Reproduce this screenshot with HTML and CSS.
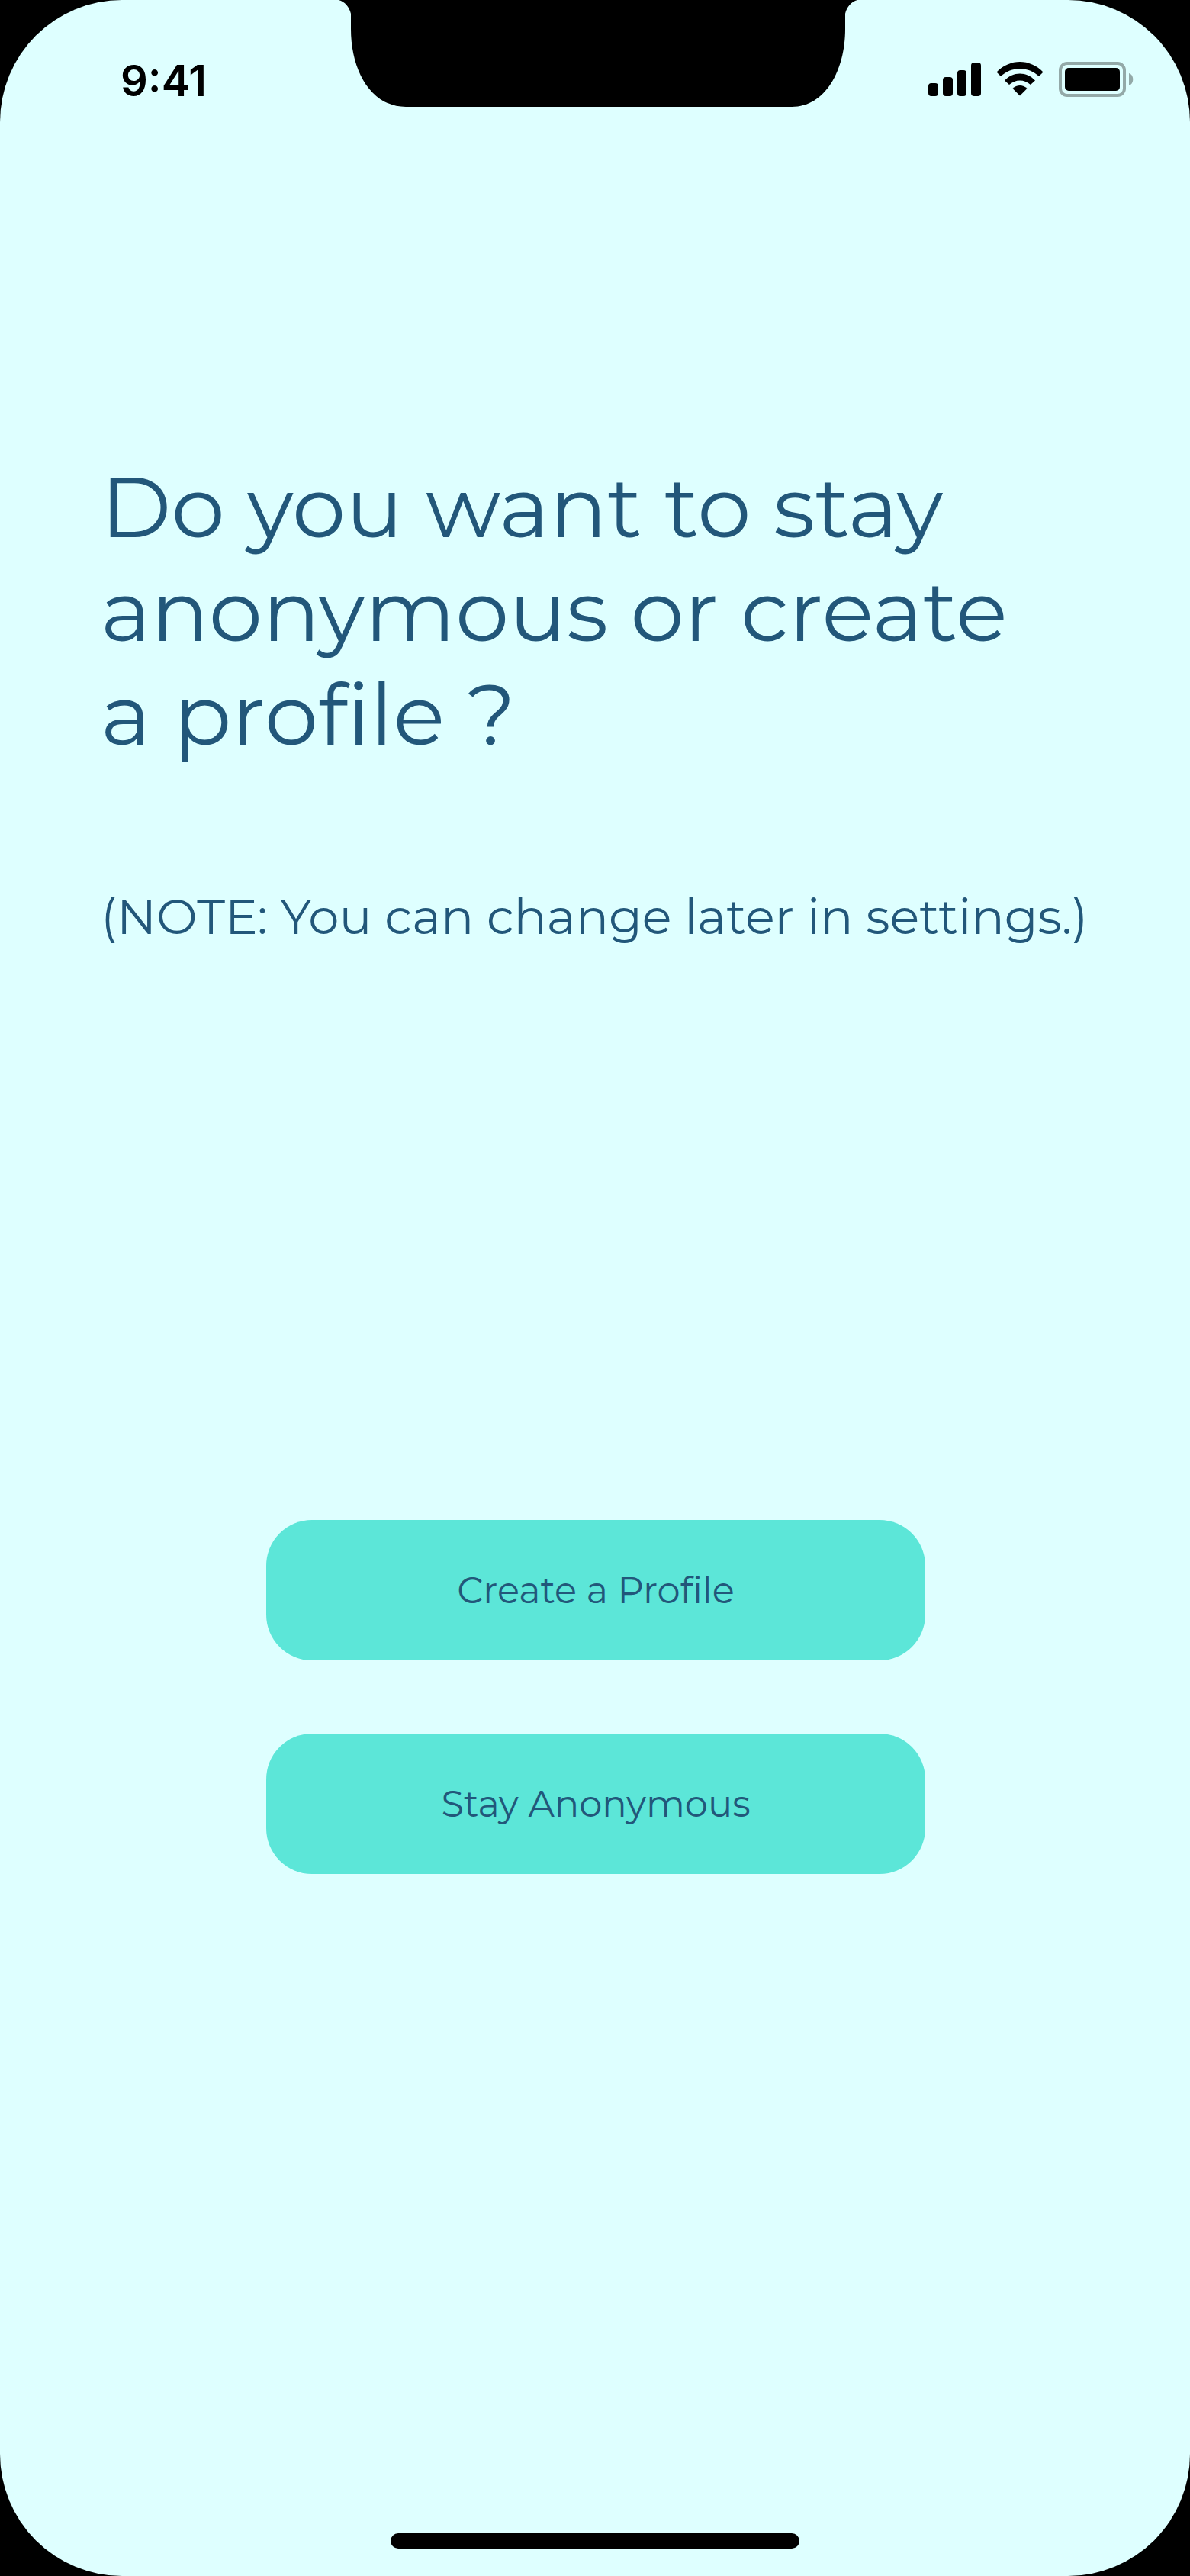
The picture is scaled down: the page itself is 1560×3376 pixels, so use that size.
FILE: index.html
```html
<!DOCTYPE html>
<html lang="en">
<head>
    <meta charset="UTF-8">
    <meta name="viewport" content="width=device-width, initial-scale=1.0">
    <title>Stay anonymous or create a profile</title>
    <link rel="stylesheet" href="styles.css">
</head>
<body>
    <div class="screen">
        <svg class="notch" viewBox="0 0 680 140" aria-hidden="true">
            <path d="M0 0 C8 2 14 9 16 18 V38 C16 92 42 140 88 140 H594 C638 140 664 92 664 38 V18 C666 9 672 2 680 0 Z"/>
        </svg>

        <header class="status-bar">
            <span class="time">9:41</span>
            <div class="status-icons">
                <svg class="icon-signal" viewBox="0 0 69 48" aria-hidden="true">
                    <rect x="0" y="29" width="13" height="17" rx="4"/>
                    <rect x="19" y="21" width="13" height="25" rx="4"/>
                    <rect x="38" y="12" width="12" height="34" rx="4"/>
                    <rect x="56" y="2" width="13" height="44" rx="4"/>
                </svg>
                <svg class="icon-wifi" viewBox="0 0 62 48" aria-hidden="true">
                    <path d="M.5 14.500 C18 -3.500 44 -3.500 61.500 14.500 L56 20 C42 6.500 20 6.500 6 20 Z"/>
                    <path d="M11 25.500 C22 13.500 40 13.500 51 25.500 L45 31 C37 23.500 25 23.500 17 31 Z"/>
                    <path d="M21.500 36 C27 30.500 35 30.500 40.500 36 L31 45.500 Z"/>
                </svg>
                <svg class="icon-battery" viewBox="0 0 98 48" aria-hidden="true">
                    <rect class="battery-shell" x="2" y="3" width="84" height="42" rx="9"/>
                    <rect x="8" y="9" width="72" height="30" rx="5"/>
                    <path class="battery-tip" d="M92 16 C99 18 99 30 92 32 Z"/>
                </svg>
            </div>
        </header>

        <main class="content">
            <h1>Do you want to stay<br>anonymous or create<br>a profile ?</h1>
            <p class="note">(NOTE: You can change later in settings.)</p>
            <div class="actions">
                <button type="button" class="button">Create a Profile</button>
                <button type="button" class="button">Stay Anonymous</button>
            </div>
        </main>

        <div class="home-indicator"></div>
    </div>
</body>
</html>
```
FILE: styles.css
```css
* {
    box-sizing: border-box;
}

body {
    margin: 0;
    background-color: #000000;
    color: #22577a;
    font-family: Montserrat, Inter, sans-serif;
}

.screen {
    position: relative;
    display: flex;
    flex-direction: column;
    min-height: 100vh;
    padding-bottom: 36px;
    background-color: #deffff;
    border-radius: 160px;
    overflow: hidden;
}

/* Notch lies over the top edge of the screen */
.notch {
    position: absolute;
    top: 0;
    left: 50%;
    width: 680px;
    height: 140px;
    margin-left: -336px;
}

.status-bar {
    display: flex;
    justify-content: space-between;
    align-items: flex-start;
    padding: 72px 74px 0 158px;
    color: #000000;
}

.time {
    font-family: Inter, sans-serif;
    font-size: 56px;
    font-weight: 600;
    line-height: 68px;
}

.status-icons {
    display: flex;
    gap: 20px;
    padding-top: 8px;
}

.status-icons svg {
    height: 48px;
}

.icon-signal {
    width: 69px;
}

.icon-wifi {
    width: 62px;
}

.icon-battery {
    width: 98px;
}

.battery-shell {
    fill: none;
    stroke: #93a9a8;
    stroke-width: 4;
}

.battery-tip {
    fill: #93a9a8;
}

.content {
    display: flex;
    flex-direction: column;
    flex: 1;
    padding: 456px 130px 0 132px;
}

h1 {
    margin: 0;
    font-size: 112px;
    font-weight: 400;
    line-height: 136px;
}

.note {
    margin: 158px 0 0;
    font-size: 64px;
    line-height: 78px;
    white-space: nowrap;
}

.actions {
    display: flex;
    flex-direction: column;
    align-items: center;
    gap: 96px;
    margin-top: 752px;
}

.button {
    width: 100%;
    max-width: 864px;
    padding: 60px 20px;
    border: none;
    border-radius: 60px;
    background-color: #5ce6d8;
    color: #22577a;
    font-family: inherit;
    font-size: 48px;
    line-height: 64px;
    cursor: pointer;
}

.home-indicator {
    align-self: center;
    width: 536px;
    height: 20px;
    border-radius: 10px;
    background-color: #000000;
}
```
